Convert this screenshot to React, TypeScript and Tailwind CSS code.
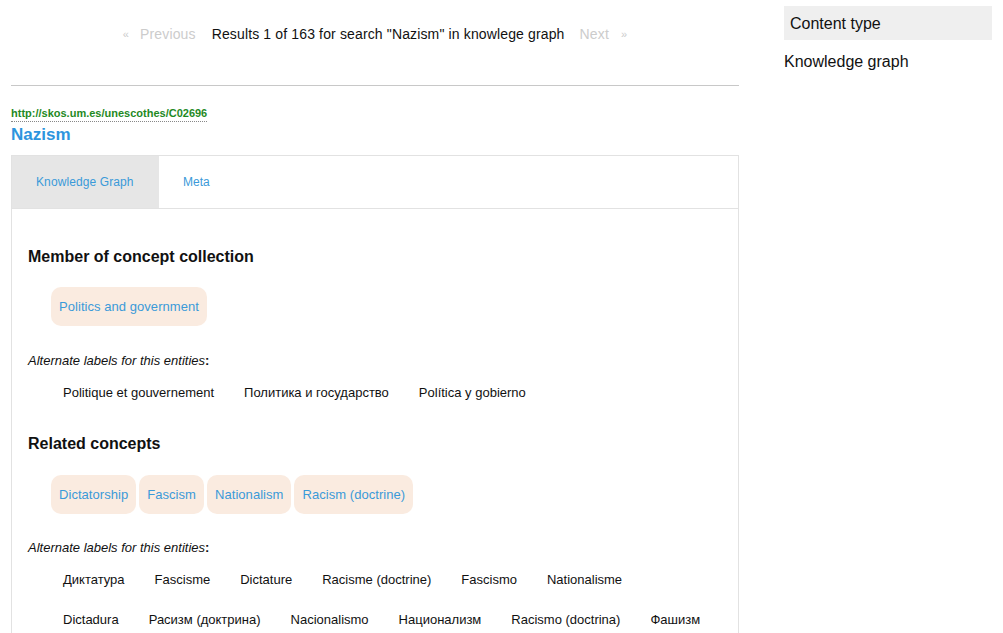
import React from 'react'

const font = { fontFamily: '"Liberation Sans", Arial, sans-serif' }

function Chip({ label }: { label: string }) {
  return (
    <span className="inline-flex items-center h-[39px] px-2 rounded-[10px] bg-[#faebe0] text-[13px] text-[#3a9ad9] tracking-[0.05px]">
      {label}
    </span>
  )
}

function AltLabels({ rows }: { rows: string[][] }) {
  return (
    <div>
      <div className="text-[13px] italic text-[#111] leading-[16px]">
        Alternate labels for this entities<span className="not-italic font-bold">:</span>
      </div>
      <div className="pl-[35px] pt-[4px]">
        {rows.map((row, i) => (
          <div key={i} className="flex gap-[30px] text-[13px] text-[#111] h-[40px] items-center">
            {row.map((l) => (
              <span key={l}>{l}</span>
            ))}
          </div>
        ))}
      </div>
    </div>
  )
}

export default function App() {
  return (
    <div className="w-[1003px] h-[633px] overflow-hidden bg-white flex" style={font}>
      <div className="w-[728px] ml-[11px] shrink-0">
        <div className="h-[67px] flex items-center justify-center text-[14px] tracking-[0.14px] pt-[1px]">
          <span className="text-[#ccc] text-[11px] mr-[11px]">«</span>
          <span className="text-[#ccc] mr-[16px]">Previous</span>
          <span className="text-[#111]">Results 1 of 163 for search "Nazism" in knowlege graph</span>
          <span className="text-[#ccc] ml-[15px]">Next</span>
          <span className="text-[#ccc] text-[11px] ml-[12px]">»</span>
        </div>
        <div className="h-[19px] border-b border-[#c8c8c8]" />
        <div className="mt-[14px]">
          <span className="text-[11px] font-bold text-[#1f8a1f] border-b border-dotted border-[#888] leading-[15px] inline-block">
            http://skos.um.es/unescothes/C02696
          </span>
        </div>
        <div className="text-[17px] font-bold text-[#2d95de] leading-[20px] mt-[1px]">Nazism</div>
        <div className="mt-[10px] border border-[#e2e2e2] h-[500px]">
          <div className="flex h-[53px] border-b border-[#e2e2e2] text-[12px] text-[#3a9ad9]">
            <div className="w-[147px] bg-[#e6e6e6] flex items-center pl-[24px] tracking-[0.1px]">Knowledge Graph</div>
            <div className="px-6 flex items-center">Meta</div>
          </div>
          <div className="px-4">
            <h2 className="text-[16px] font-bold text-[#111] mt-[38px] leading-[20px]">Member of concept collection</h2>
            <div className="flex gap-[3px] pl-[23px] mt-[20px]">
              <Chip label="Politics and government" />
            </div>
            <div className="mt-[27px]">
              <AltLabels rows={[['Politique et gouvernement', 'Политика и государство', 'Política y gobierno']]} />
            </div>
            <h2 className="text-[16px] font-bold text-[#111] mt-[21px] leading-[20px]">Related concepts</h2>
            <div className="flex gap-[3px] pl-[23px] mt-[21px]">
              <Chip label="Dictatorship" />
              <Chip label="Fascism" />
              <Chip label="Nationalism" />
              <Chip label="Racism (doctrine)" />
            </div>
            <div className="mt-[26px]">
              <AltLabels
                rows={[
                  ['Диктатура', 'Fascisme', 'Dictature', 'Racisme (doctrine)', 'Fascismo', 'Nationalisme'],
                  ['Dictadura', 'Расизм (доктрина)', 'Nacionalismo', 'Национализм', 'Racismo (doctrina)', 'Фашизм'],
                ]}
              />
            </div>
          </div>
        </div>
      </div>
      <div className="w-[208px] ml-[45px] shrink-0 pt-[6px]">
        <div className="h-[34px] bg-[#efefef] flex items-center px-[6px] pt-[1px] text-[16px] text-[#111]">Content type</div>
        <div className="mt-[10px] text-[16px] text-[#111]">Knowledge graph</div>
      </div>
    </div>
  )
}
